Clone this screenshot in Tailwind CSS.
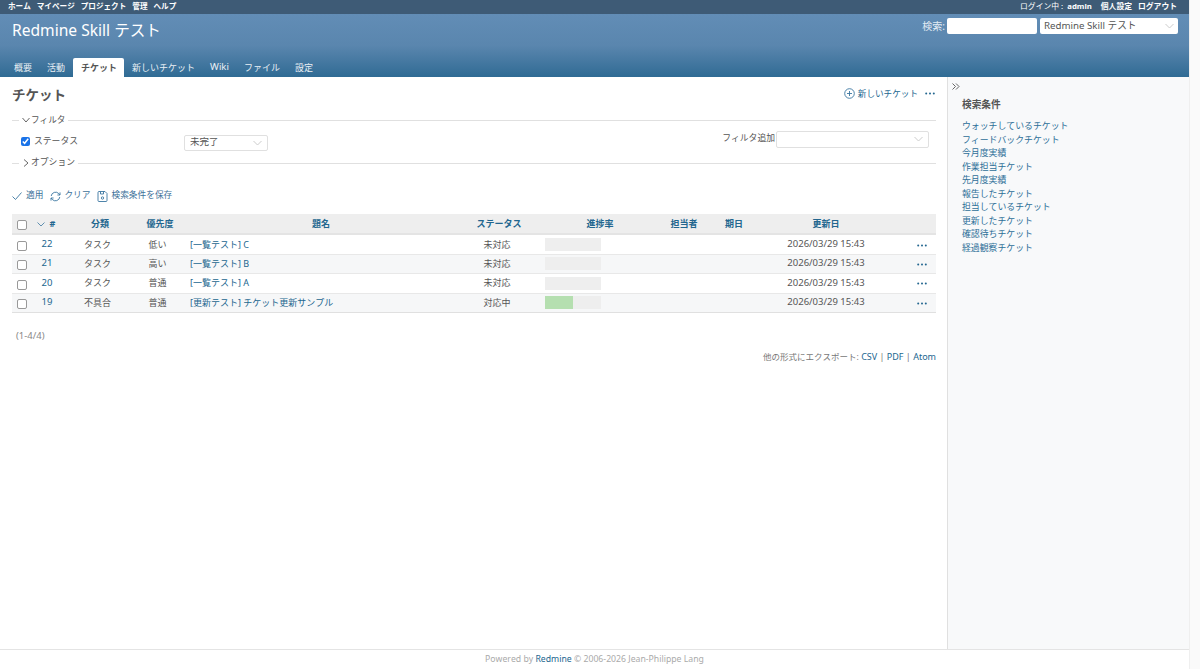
<!DOCTYPE html>
<html lang="ja">
<head>
  <meta charset="UTF-8">
  <title>チケット - Redmine Skill テスト</title>
  <script src="https://cdn.jsdelivr.net/npm/@tailwindcss/browser@4"></script>
</head>
<body class="h-[669px] overflow-hidden bg-white text-[9.5px] text-[#555] antialiased [font-kerning:none] font-['Noto_Sans','Noto_Sans_CJK_JP',sans-serif]">
  <div class="flex h-[669px]">
    <div class="flex flex-col w-[1189px] shrink-0">

      <!-- top menu -->
      <div class="flex justify-between items-center h-[14px] shrink-0 pl-[8px] pr-[12px] bg-[#3e5b76] text-white text-[7.6px] font-bold leading-none">
        <div class="flex gap-[6px]">
          <a>ホーム</a><a>マイページ</a><a>プロジェクト</a><a>管理</a><a>ヘルプ</a>
        </div>
        <div class="flex gap-[6px] text-[7.8px]">
          <span class="font-normal mr-[3px]">ログイン中&nbsp;:&nbsp; <b class="font-bold">admin</b></span><a>個人設定</a><a>ログアウト</a>
        </div>
      </div>

      <!-- header -->
      <div class="relative h-[63px] shrink-0 bg-linear-to-b from-[#628db6] via-[#5a86ae] to-[#2f6b94] text-white">
        <div class="flex justify-between items-start h-[44px]">
          <h1 class="pl-[12px] pt-[4px] text-[15.6px] leading-[24px]">Redmine Skill テスト</h1>
          <div class="flex items-center pt-[4px] pr-[11px] text-[10px] text-[#e3ebf3]">
            <label class="mr-[2px]">検索:</label>
            <input type="text" class="w-[90px] h-[16px] rounded-[2px] bg-white mr-[3px]">
            <div class="flex justify-between items-center w-[138px] h-[16px] px-[4px] rounded-[2px] bg-white text-[#555] text-[9.7px]">
              <span>Redmine Skill テスト</span>
              <svg class="w-[9px] h-[6px]" viewBox="0 0 9 6" fill="none" stroke="#ccc" stroke-width="1"><path d="M.5 1l4 4 4-4"/></svg>
            </div>
          </div>
        </div>
        <div class="absolute bottom-0 left-[6px] flex h-[19px] items-center text-[9px] text-[#eaf0f5]">
          <a class="px-[8px]">概要</a>
          <a class="px-[7px]">活動</a>
          <a class="flex items-center h-[19px] pl-[8px] pr-[7px] ml-[1px] rounded-t-[2px] bg-white text-[#555] font-bold">チケット</a>
          <a class="px-[8px]">新しいチケット</a>
          <a class="px-[7px] text-[9.5px]">Wiki</a>
          <a class="pl-[8px] pr-[7px]">ファイル</a>
          <a class="px-[8px]">設定</a>
        </div>
      </div>

      <div class="flex flex-1 min-h-0">
        <!-- content -->
        <div class="w-[947px] shrink-0 pl-[12px] pr-[11px]">
          <div class="flex justify-between items-center h-[36px] pt-[1px]">
            <h2 class="text-[13.5px] font-bold text-[#555]">チケット</h2>
            <div class="flex items-center text-[#22668f] text-[8.6px] -mt-[3px]">
              <svg class="w-[11px] h-[11px] mr-[3px]" viewBox="0 0 11 11" fill="none" stroke="#3a76a0" stroke-width=".9"><circle cx="5.5" cy="5.5" r="4.8"/><path d="M5.5 3v5M3 5.5h5"/></svg>
              <a>新しいチケット</a>
              <svg class="w-[10px] h-[3px] ml-[7px] mr-[1px]" viewBox="0 0 10 3" fill="#22668f"><circle cx="1.2" cy="1.5" r="1"/><circle cx="5" cy="1.5" r="1"/><circle cx="8.8" cy="1.5" r="1"/></svg>
            </div>
          </div>

          <!-- filters -->
          <div class="flex items-center h-[14px]">
            <span class="w-[7px] h-px bg-[#e0e0e0]"></span>
            <svg class="w-[8px] h-[6px] ml-[3px] mr-[1px]" viewBox="0 0 8 6" fill="none" stroke="#555" stroke-width=".9"><path d="M.5 1l3.5 4 3.5-4"/></svg>
            <span class="text-[8.6px] mr-[3px]">フィルタ</span>
            <span class="flex-1 h-px bg-[#e0e0e0]"></span>
          </div>
          <div class="flex items-center justify-between h-[29px]">
            <div class="flex items-center">
              <input type="checkbox" checked class="w-[9px] h-[9px] ml-[9px] mr-[4px] accent-[#1a73e8]">
              <label class="w-[150px] text-[8.8px]">ステータス</label>
              <div class="flex justify-between items-center w-[84px] h-[16px] mt-[2px] px-[5px] rounded-[2px] border border-[#e0e0e0] text-[9.5px]">
                <span>未完了</span>
                <svg class="w-[9px] h-[6px]" viewBox="0 0 9 6" fill="none" stroke="#ccc" stroke-width="1"><path d="M.5 1l4 4 4-4"/></svg>
              </div>
            </div>
            <div class="flex items-center mr-[7px] -mt-[5px]">
              <label class="text-[8.8px] mr-[1px]">フィルタ追加</label>
              <div class="flex justify-end items-center w-[153px] h-[17px] px-[5px] rounded-[2px] border border-[#e0e0e0]">
                <svg class="w-[9px] h-[6px]" viewBox="0 0 9 6" fill="none" stroke="#ccc" stroke-width="1"><path d="M.5 1l4 4 4-4"/></svg>
              </div>
            </div>
          </div>
          <div class="flex items-center h-[14px]">
            <span class="w-[7px] h-px bg-[#e0e0e0]"></span>
            <svg class="w-[6px] h-[8px] ml-[4px] mr-[2px]" viewBox="0 0 6 8" fill="none" stroke="#555" stroke-width=".9"><path d="M1 .5l4 3.5-4 3.5"/></svg>
            <span class="text-[8.8px] mr-[3px]">オプション</span>
            <span class="flex-1 h-px bg-[#e0e0e0]"></span>
          </div>

          <!-- actions -->
          <div class="flex items-center h-[14px] mt-[19px] text-[8.7px] text-[#3d7199]">
            <svg class="w-[10px] h-[8px] mr-[4px]" viewBox="0 0 10 8" fill="none" stroke="#3a76a0" stroke-width=".9"><path d="M.5 4.5l3 3 6-7"/></svg>
            <a class="mr-[7px]">適用</a>
            <svg class="w-[11px] h-[11px] mr-[3px]" viewBox="0 0 11 11" fill="none" stroke="#3a76a0" stroke-width=".9"><path d="M1.2 5a4.4 4.4 0 0 1 7.6-2.4L10 4M9.8 6a4.4 4.4 0 0 1-7.6 2.4L1 7"/><path d="M10 1.4V4H7.4M1 9.6V7h2.6"/></svg>
            <a class="mr-[7px]">クリア</a>
            <svg class="w-[11px] h-[11px] mr-[3px]" viewBox="0 0 11 11" fill="none" stroke="#3a76a0" stroke-width=".9"><path d="M1 1.5a1 1 0 0 1 1-1h6l2 2v7a1 1 0 0 1-1 1H2a1 1 0 0 1-1-1z"/><path d="M3.5.5v2.5h3V.5"/><circle cx="5.5" cy="7" r="1.2"/></svg>
            <a>検索条件を保存</a>
          </div>

          <!-- issue list -->
          <table class="w-[924px] mt-[11px] table-fixed border-collapse text-[9px]">
            <colgroup>
              <col class="w-[20px]"><col class="w-[30px]"><col class="w-[76px]"><col class="w-[44px]"><col class="w-[278px]"><col class="w-[74px]"><col class="w-[132px]"><col class="w-[36px]"><col class="w-[64px]"><col class="w-[120px]"><col class="w-[50px]">
            </colgroup>
            <thead>
              <tr class="h-[20px] bg-[#eeeeee] border-b-2 border-[#e4e4e4] text-[#22668f] font-bold">
                <th class="text-center"><input type="checkbox" class="appearance-none translate-y-[1px] w-[10px] h-[10px] align-middle bg-white border border-[#999] rounded-[2px]"></th>
                <th class="text-center pr-[2px]"><svg class="inline w-[8px] h-[5px] mr-[5px]" viewBox="0 0 8 5" fill="none" stroke="#3a76a0" stroke-width=".8"><path d="M.5.5l3.5 3.5 3.5-3.5"/></svg>#</th>
                <th>分類</th><th>優先度</th><th>題名</th><th class="pl-[4px]">ステータス</th><th>進捗率</th><th>担当者</th><th>期日</th><th>更新日</th><th></th>
              </tr>
            </thead>
            <tbody class="text-center">
              <tr class="h-[20px] border-b border-[#e8e8e8]">
                <td><input type="checkbox" class="appearance-none translate-y-[1px] w-[10px] h-[10px] align-middle bg-white border border-[#999] rounded-[2px]"></td>
                <td class="text-[#22668f] text-[9.5px]">22</td><td class="pr-[5px]">タスク</td><td class="pr-[5px]">低い</td>
                <td class="text-left pl-[8px] text-[#22668f]">[一覧テスト] C</td><td>未対応</td>
                <td class="pl-[11px]"><div class="w-[56px] h-[13px] bg-[#eeeeee]"></div></td><td></td><td></td>
                <td class="text-[9.5px]">2026/03/29 15:43</td>
                <td class="text-right pr-[9px]"><svg class="inline w-[10px] h-[3px]" viewBox="0 0 10 3" fill="#22668f"><circle cx="1.2" cy="1.5" r="1"/><circle cx="5" cy="1.5" r="1"/><circle cx="8.8" cy="1.5" r="1"/></svg></td>
              </tr>
              <tr class="h-[19px] bg-[#f6f7f8] border-b border-[#e8e8e8]">
                <td><input type="checkbox" class="appearance-none translate-y-[1px] w-[10px] h-[10px] align-middle bg-white border border-[#999] rounded-[2px]"></td>
                <td class="text-[#22668f] text-[9.5px]">21</td><td class="pr-[5px]">タスク</td><td class="pr-[5px]">高い</td>
                <td class="text-left pl-[8px] text-[#22668f]">[一覧テスト] B</td><td>未対応</td>
                <td class="pl-[11px]"><div class="w-[56px] h-[13px] bg-[#eeeeee]"></div></td><td></td><td></td>
                <td class="text-[9.5px]">2026/03/29 15:43</td>
                <td class="text-right pr-[9px]"><svg class="inline w-[10px] h-[3px]" viewBox="0 0 10 3" fill="#22668f"><circle cx="1.2" cy="1.5" r="1"/><circle cx="5" cy="1.5" r="1"/><circle cx="8.8" cy="1.5" r="1"/></svg></td>
              </tr>
              <tr class="h-[20px] border-b border-[#e8e8e8]">
                <td><input type="checkbox" class="appearance-none translate-y-[1px] w-[10px] h-[10px] align-middle bg-white border border-[#999] rounded-[2px]"></td>
                <td class="text-[#22668f] text-[9.5px]">20</td><td class="pr-[5px]">タスク</td><td class="pr-[5px]">普通</td>
                <td class="text-left pl-[8px] text-[#22668f]">[一覧テスト] A</td><td>未対応</td>
                <td class="pl-[11px]"><div class="w-[56px] h-[13px] bg-[#eeeeee]"></div></td><td></td><td></td>
                <td class="text-[9.5px]">2026/03/29 15:43</td>
                <td class="text-right pr-[9px]"><svg class="inline w-[10px] h-[3px]" viewBox="0 0 10 3" fill="#22668f"><circle cx="1.2" cy="1.5" r="1"/><circle cx="5" cy="1.5" r="1"/><circle cx="8.8" cy="1.5" r="1"/></svg></td>
              </tr>
              <tr class="h-[19px] bg-[#f6f7f8] border-b border-[#e0e0e0]">
                <td><input type="checkbox" class="appearance-none translate-y-[1px] w-[10px] h-[10px] align-middle bg-white border border-[#999] rounded-[2px]"></td>
                <td class="text-[#22668f] text-[9.5px]">19</td><td class="pr-[5px]">不具合</td><td class="pr-[5px]">普通</td>
                <td class="text-left pl-[8px] text-[#22668f]">[更新テスト] チケット更新サンプル</td><td>対応中</td>
                <td class="pl-[11px]"><div class="w-[56px] h-[13px] bg-[#eeeeee]"><div class="w-[28px] h-[13px] bg-[#b5dfb0]"></div></div></td><td></td><td></td>
                <td class="text-[9.5px]">2026/03/29 15:43</td>
                <td class="text-right pr-[9px]"><svg class="inline w-[10px] h-[3px]" viewBox="0 0 10 3" fill="#22668f"><circle cx="1.2" cy="1.5" r="1"/><circle cx="5" cy="1.5" r="1"/><circle cx="8.8" cy="1.5" r="1"/></svg></td>
              </tr>
            </tbody>
          </table>

          <p class="mt-[16px] pl-[4px] text-[#888] leading-[14px]">(1-4/4)</p>
          <p class="mt-[7px] text-right text-[#777] text-[9px] leading-[14px]"><span class="text-[8.5px]">他の形式にエクスポート:</span> <a class="text-[#22668f]">CSV</a> | <a class="text-[#22668f]">PDF</a> | <a class="text-[#22668f]">Atom</a></p>
        </div>

        <!-- sidebar -->
        <div class="flex-1 relative bg-[#f8f9fa] border-l border-[#e0e0e0] pl-[14px] pt-[21px]">
          <svg class="absolute left-[4px] top-[6px] w-[8px] h-[7px]" viewBox="0 0 8 7" fill="none" stroke="#555" stroke-width=".9"><path d="M.5.5l3 3-3 3M4 .5l3 3-3 3"/></svg>
          <h3 class="text-[9.7px] font-bold leading-[14px] text-[#555]">検索条件</h3>
          <ul class="mt-[7px] text-[8.9px] leading-[13.5px] text-[#2d6f98]">
            <li>ウォッチしているチケット</li>
            <li>フィードバックチケット</li>
            <li>今月度実績</li>
            <li>作業担当チケット</li>
            <li>先月度実績</li>
            <li>報告したチケット</li>
            <li>担当しているチケット</li>
            <li>更新したチケット</li>
            <li>確認待ちチケット</li>
            <li>経過観察チケット</li>
          </ul>
        </div>
      </div>

      <!-- footer -->
      <div class="flex items-center justify-center h-[20px] shrink-0 border-t border-[#e4e4e4] text-[#aaa] text-[8.7px]">
        <span>Powered by <a class="text-[#22668f]">Redmine</a> © 2006-2026 Jean-Philippe Lang</span>
      </div>
    </div>

    <!-- scrollbar track -->
    <div class="flex-1 bg-[#fafafa] border-l border-[#efefef]"></div>
  </div>
</body>
</html>
